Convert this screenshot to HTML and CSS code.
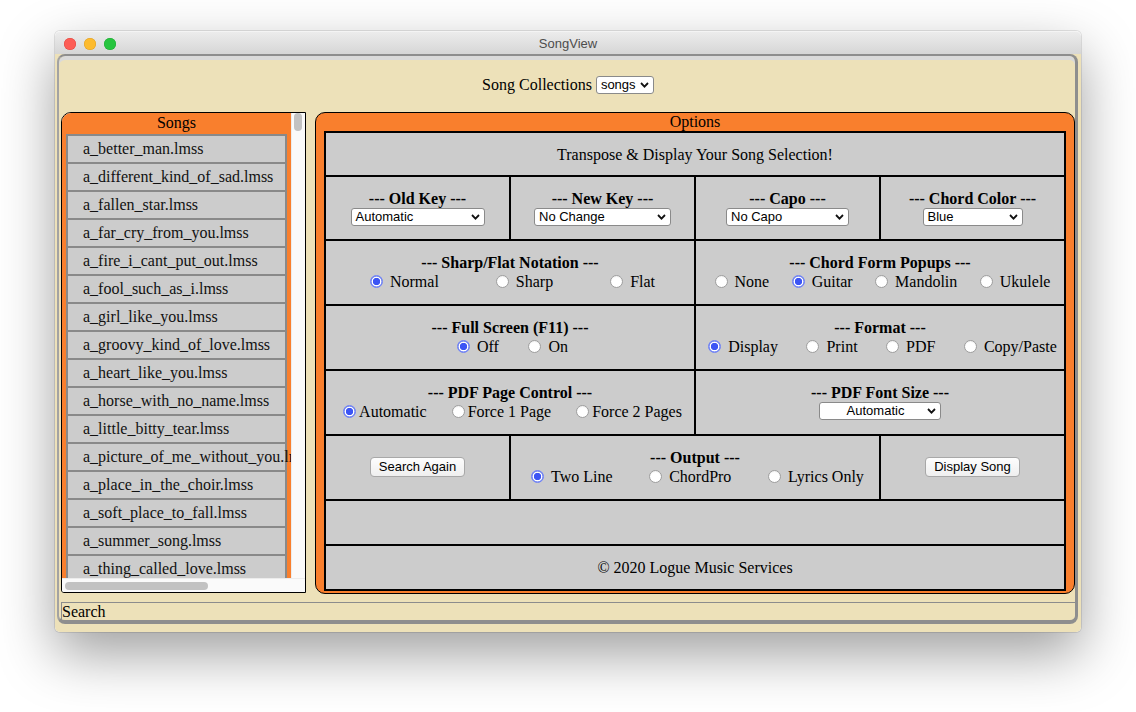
FILE: index.html
```html
<!DOCTYPE html>
<html>
<head>
<meta charset="utf-8">
<title>SongView</title>
<link rel="stylesheet" href="styles.css">
</head>
<body>
<div class="window">
  <div class="titlebar">
    <div class="lights">
      <span class="light red"></span>
      <span class="light yellow"></span>
      <span class="light green"></span>
    </div>
    <div class="title">SongView</div>
    <div></div>
  </div>
  <div class="wbody">
    <div class="frame">
      <div class="collections">
        <span>Song Collections</span>
        <div class="sel w-songs"><span class="sel-text">songs</span><svg class="chev" width="9" height="6" viewBox="0 0 9 6"><path d="M1 1 L4.5 4.6 L8 1" fill="none" stroke="#111" stroke-width="1.8"/></svg></div>
      </div>
      <div class="main">
        <div class="songs">
          <div class="songs-view">
            <div class="songs-head">Songs</div>
            <div class="song first">a_better_man.lmss</div>
            <div class="song">a_different_kind_of_sad.lmss</div>
            <div class="song">a_fallen_star.lmss</div>
            <div class="song">a_far_cry_from_you.lmss</div>
            <div class="song">a_fire_i_cant_put_out.lmss</div>
            <div class="song">a_fool_such_as_i.lmss</div>
            <div class="song">a_girl_like_you.lmss</div>
            <div class="song">a_groovy_kind_of_love.lmss</div>
            <div class="song">a_heart_like_you.lmss</div>
            <div class="song">a_horse_with_no_name.lmss</div>
            <div class="song">a_little_bitty_tear.lmss</div>
            <div class="song">a_picture_of_me_without_you.lmss</div>
            <div class="song">a_place_in_the_choir.lmss</div>
            <div class="song">a_soft_place_to_fall.lmss</div>
            <div class="song">a_summer_song.lmss</div>
            <div class="song">a_thing_called_love.lmss</div>
          </div>
          <div class="vtrack"><div class="vthumb"></div></div>
          <div class="htrack"><div class="hthumb"></div></div>
        </div>
        <div class="options">
          <div class="opt-head">Options</div>
          <div class="grid">
            <div class="cell span4">Transpose &amp; Display Your Song Selection!</div>

            <div class="cell two">
              <div class="hd">--- Old Key ---</div>
              <div class="sel w-old"><span class="sel-text">Automatic</span><svg class="chev" width="9" height="6" viewBox="0 0 9 6"><path d="M1 1 L4.5 4.6 L8 1" fill="none" stroke="#111" stroke-width="1.8"/></svg></div>
            </div>
            <div class="cell two">
              <div class="hd">--- New Key ---</div>
              <div class="sel w-new"><span class="sel-text">No Change</span><svg class="chev" width="9" height="6" viewBox="0 0 9 6"><path d="M1 1 L4.5 4.6 L8 1" fill="none" stroke="#111" stroke-width="1.8"/></svg></div>
            </div>
            <div class="cell two">
              <div class="hd">--- Capo ---</div>
              <div class="sel w-capo"><span class="sel-text">No Capo</span><svg class="chev" width="9" height="6" viewBox="0 0 9 6"><path d="M1 1 L4.5 4.6 L8 1" fill="none" stroke="#111" stroke-width="1.8"/></svg></div>
            </div>
            <div class="cell two">
              <div class="hd">--- Chord Color ---</div>
              <div class="sel w-color"><span class="sel-text">Blue</span><svg class="chev" width="9" height="6" viewBox="0 0 9 6"><path d="M1 1 L4.5 4.6 L8 1" fill="none" stroke="#111" stroke-width="1.8"/></svg></div>
            </div>

            <div class="cell two span2">
              <div class="hd">--- Sharp/Flat Notation ---</div>
              <div class="radios g-sf">
                <label class="opt"><input type="radio" name="sf" checked>Normal</label>
                <label class="opt"><input type="radio" name="sf">Sharp</label>
                <label class="opt"><input type="radio" name="sf">Flat</label>
              </div>
            </div>
            <div class="cell two span2">
              <div class="hd">--- Chord Form Popups ---</div>
              <div class="radios g-cf">
                <label class="opt"><input type="radio" name="cf">None</label>
                <label class="opt"><input type="radio" name="cf" checked>Guitar</label>
                <label class="opt"><input type="radio" name="cf">Mandolin</label>
                <label class="opt"><input type="radio" name="cf">Ukulele</label>
              </div>
            </div>

            <div class="cell two span2">
              <div class="hd">--- Full Screen (F11) ---</div>
              <div class="radios g-fs">
                <label class="opt"><input type="radio" name="fs" checked>Off</label>
                <label class="opt"><input type="radio" name="fs">On</label>
              </div>
            </div>
            <div class="cell two span2">
              <div class="hd">--- Format ---</div>
              <div class="radios g-fmt">
                <label class="opt"><input type="radio" name="fmt" checked>Display</label>
                <label class="opt"><input type="radio" name="fmt">Print</label>
                <label class="opt"><input type="radio" name="fmt">PDF</label>
                <label class="opt"><input type="radio" name="fmt">Copy/Paste</label>
              </div>
            </div>

            <div class="cell two span2">
              <div class="hd">--- PDF Page Control ---</div>
              <div class="radios g-pdf">
                <label class="opt tight"><input type="radio" name="pdf" checked>Automatic</label>
                <label class="opt tight"><input type="radio" name="pdf">Force 1 Page</label>
                <label class="opt tight"><input type="radio" name="pdf">Force 2 Pages</label>
              </div>
            </div>
            <div class="cell two span2">
              <div class="hd">--- PDF Font Size ---</div>
              <div class="sel w-pdfsize"><span class="sel-text center">Automatic</span><svg class="chev" width="9" height="6" viewBox="0 0 9 6"><path d="M1 1 L4.5 4.6 L8 1" fill="none" stroke="#111" stroke-width="1.8"/></svg></div>
            </div>

            <div class="cell">
              <button class="btn" type="button">Search Again</button>
            </div>
            <div class="cell two span2">
              <div class="hd">--- Output ---</div>
              <div class="radios g-out">
                <label class="opt"><input type="radio" name="out" checked>Two Line</label>
                <label class="opt"><input type="radio" name="out">ChordPro</label>
                <label class="opt"><input type="radio" name="out">Lyrics Only</label>
              </div>
            </div>
            <div class="cell">
              <button class="btn" type="button">Display Song</button>
            </div>

            <div class="cell span4"></div>
            <div class="cell span4">© 2020 Logue Music Services</div>
          </div>
        </div>
      </div>
      <div class="search">Search</div>
    </div>
  </div>
</div>
</body>
</html>
```

FILE: styles.css
```css
* { box-sizing: border-box; }

html, body {
  margin: 0;
  padding: 0;
  background: #ffffff;
}

body {
  font-family: "Liberation Serif", "Times New Roman", serif;
  font-size: 16px;
  color: #000;
  padding: 31px 0 0 55px;
  height: 712px;
  overflow: hidden;
}

.window {
  width: 1026px;
  height: 601px;
  border-radius: 5px;
  box-shadow: 0 0 0 1px rgba(0,0,0,0.10), 0 22px 55px rgba(0,0,0,0.38);
  display: flex;
  flex-direction: column;
}

/* Title bar */
.titlebar {
  height: 23px;
  flex: none;
  display: grid;
  grid-template-columns: 1fr auto 1fr;
  align-items: center;
  background: linear-gradient(#ececec, #d6d6d6);
  border-top: 1px solid #f4f4f4;
  border-radius: 5px 5px 0 0;
}

.lights {
  display: flex;
  gap: 8px;
  padding-left: 9px;
  padding-top: 1px;
}

.light {
  width: 12px;
  height: 12px;
  border-radius: 50%;
  display: block;
}
.light.red { background: #fd5d55; box-shadow: inset 0 0 0 0.5px #e1453e; }
.light.yellow { background: #fdbb2e; box-shadow: inset 0 0 0 0.5px #de9e23; }
.light.green { background: #27c53f; box-shadow: inset 0 0 0 0.5px #1ea932; }

.title {
  font-family: "Liberation Sans", Arial, sans-serif;
  font-size: 13px;
  color: #4d4d4d;
  padding-top: 1px;
}

/* Window body */
.wbody {
  flex: 1;
  background: #ede1b9;
  padding: 0 3px 8px 2px;
  border-radius: 0 0 5px 5px;
  display: flex;
}

.frame {
  flex: 1;
  border-top: 2px solid #8e8e8e;
  border-left: 2px solid #a3a3a3;
  border-right: 3px solid #8e8e8e;
  border-bottom: 4px solid #8e8e8e;
  border-radius: 8px;
  box-shadow: inset 0 4px 0 #dadada;
  padding-left: 2px;
  display: flex;
  flex-direction: column;
}

.collections {
  height: 56px;
  display: flex;
  align-items: center;
  justify-content: center;
  gap: 4px;
  padding-top: 2px;
}

.main {
  height: 482px;
  display: flex;
  gap: 9px;
  align-items: flex-start;
}

/* Songs list */
.songs {
  width: 245px;
  height: 481px;
  border: 1px solid #000;
  border-radius: 10px 0 0 3px;
  overflow: hidden;
  display: grid;
  grid-template-columns: 229px 14px;
  grid-template-rows: 465px 14px;
  background: #fafafa;
}

.songs-view {
  background: #f97f2d;
  overflow: hidden;
}

.songs-head {
  height: 21px;
  line-height: 19px;
  text-align: center;
}

.song {
  margin: 0 4px;
  background: #cccccc;
  border: 2px solid #898989;
  border-top: none;
  height: 28px;
  line-height: 26px;
  padding-left: 15px;
  white-space: nowrap;
  color: #111;
}
.song.first {
  border-top: 2px solid #898989;
  height: 30px;
}

.vtrack {
  background: #fafafa;
  border-left: 1px solid #ececec;
  padding: 0 2px 0 2px;
}

.vthumb {
  width: 8px;
  height: 18px;
  border-radius: 4px;
  background: #c2c2c2;
}

.htrack {
  grid-column: 1 / span 2;
  background: #fafafa;
  border-top: 1px solid #ececec;
  padding: 3px 3px;
}

.hthumb {
  width: 143px;
  height: 8px;
  border-radius: 4px;
  background: #c2c2c2;
}

/* Options */
.options {
  width: 760px;
  height: 482px;
  background: #f97f2d;
  border: 1px solid #000;
  border-radius: 10px;
  padding: 0 8px 2px 8px;
}

.opt-head {
  height: 18px;
  line-height: 18px;
  text-align: center;
}

.grid {
  display: grid;
  grid-template-columns: repeat(4, 1fr);
  grid-template-rows: 42px 62px 63px 63px 63px 63px 43px 43px;
  gap: 2px;
  background: #000;
  border: 2px solid #000;
}

.cell {
  background: #cccccc;
  display: flex;
  flex-direction: column;
  align-items: center;
  justify-content: center;
  line-height: 19px;
  text-align: center;
}

.cell.two { padding-bottom: 2px; }

.span4 { grid-column: span 4; }
.span2 { grid-column: span 2; }

.hd {
  font-weight: bold;
  height: 19px;
  white-space: nowrap;
}

/* Selects */
.sel {
  display: inline-flex;
  align-items: center;
  height: 18px;
  border: 1px solid #8a8a8a;
  border-radius: 3px;
  background: #ffffff;
  font-family: "Liberation Sans", Arial, sans-serif;
  font-size: 13px;
  line-height: 16px;
  padding: 0 4px 0 4px;
  color: #000;
}

.sel-text {
  flex: 1;
  text-align: left;
  white-space: nowrap;
}
.sel-text.center { text-align: center; }

.chev { flex: none; display: block; }

.w-songs { width: 58px; }
.w-old { width: 134px; }
.w-new { width: 137px; }
.w-capo { width: 123px; }
.w-color { width: 100px; }
.w-pdfsize { width: 122px; }

/* Radios */
.radios {
  display: flex;
  justify-content: center;
  align-items: center;
  height: 19px;
}

.g-sf { gap: 52px; }
.g-cf { gap: 17.5px; }
.g-fs { gap: 24.5px; }
.g-fmt { gap: 23.5px; }
.g-pdf { gap: 20px; }
.g-out { gap: 31.5px; }

.opt {
  display: inline-flex;
  align-items: center;
  white-space: nowrap;
}

.opt input {
  -webkit-appearance: none;
  appearance: none;
  width: 13px;
  height: 13px;
  margin: 0 7px 0 5px;
  border-radius: 50%;
  border: 1px solid #9d9d9d;
  background: #ffffff;
  box-shadow: inset 0 1px 1px rgba(0,0,0,0.06);
  flex: none;
}

.opt.tight input { margin-right: 3px; }

.opt input:checked {
  border-color: #6d80f6;
  background: radial-gradient(circle closest-side, #3c55f4 0, #3c55f4 62%, #ffffff 72%, #ffffff 84%, #7f91f7 94%);
}

/* Buttons */
.btn {
  height: 20px;
  padding: 0 8px;
  border: 1px solid #a8a8a8;
  border-radius: 4px;
  background: linear-gradient(#fdfdfd, #efefef);
  font-family: "Liberation Sans", Arial, sans-serif;
  font-size: 13px;
  line-height: 18px;
  color: #000;
  margin-top: -1px;
}

/* Search bar */
.search {
  margin-top: 8px;
  height: 18px;
  border-top: 1px solid #8c8c8c;
  border-left: 1px solid #8c8c8c;
  line-height: 17px;
  padding-left: 0;
  white-space: nowrap;
}
```
